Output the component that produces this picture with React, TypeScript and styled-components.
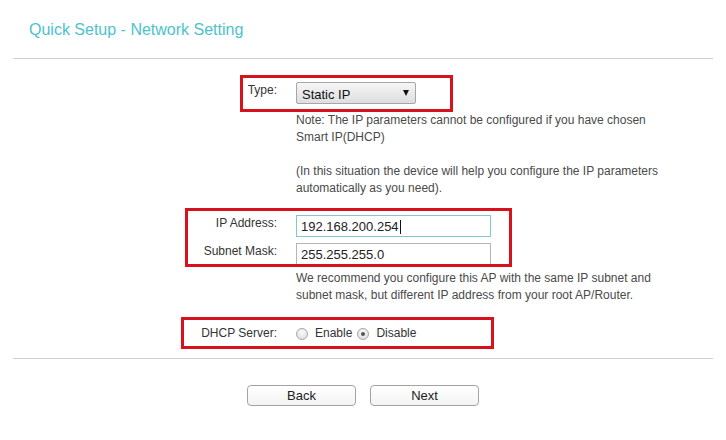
import styled, { createGlobalStyle } from 'styled-components';

const GlobalStyle = createGlobalStyle`
	body {
		margin: 0;
		background: #ffffff;
		font-family: 'Liberation Sans', Arial, sans-serif;
	}
`;

const Page = styled.div`
	position: relative;
	width: 726px;
	height: 440px;
	overflow: hidden;
`;

const Title = styled.h1`
	margin: 0;
	padding: 20px 0 18px 29px;
	font-size: 16px;
	line-height: 20px;
	font-weight: normal;
	color: #4cc3cc;
`;

const Divider = styled.div<{ $top?: number }>`
	margin: ${(props) => props.$top || 0}px 13px 0;
	height: 1px;
	background: #d0d0d0;
`;

const Form = styled.div`
	display: flex;
	flex-direction: column;
`;

const Row = styled.div<{ $top: number }>`
	display: grid;
	grid-template-columns: 277px 372px;
	column-gap: 19px;
	align-items: start;
	margin-top: ${(props) => props.$top}px;
`;

const Label = styled.label`
	text-align: right;
	font-size: 12px;
	line-height: 17px;
	color: #333;
`;

const Note = styled.div`
	grid-column: 2;
	font-size: 12px;
	line-height: 17px;
	color: #4a4a4a;

	p {
		margin: 0;
	}
	p + p {
		margin-top: 17px;
	}
`;

const Select = styled.div`
	display: flex;
	align-items: center;
	justify-content: space-between;
	box-sizing: border-box;
	width: 120px;
	height: 22px;
	padding: 3px 6px 1px 5px;
	border: 1px solid #a6a6a6;
	border-radius: 2px;
	background: linear-gradient(#f6f6f6, #dedede);
	font-size: 13px;
	line-height: 17px;
	color: #111;

	&::after {
		content: '';
		margin-top: -2px;
		border-left: 3.5px solid transparent;
		border-right: 3.5px solid transparent;
		border-top: 6px solid #111;
	}
`;

const Input = styled.div<{ $focused?: boolean }>`
	display: flex;
	align-items: center;
	box-sizing: border-box;
	width: 195px;
	height: 22px;
	padding: 1px 4px 0;
	border: 1px solid ${(props) => (props.$focused ? '#7fc8cf' : '#b5b5b5')};
	background: #fff;
	font-size: 13px;
	line-height: 17px;
	color: #222;
`;

const Caret = styled.span`
	display: inline-block;
	width: 1px;
	height: 14px;
	margin-left: 1px;
	background: #111;
`;

const RadioGroup = styled.div`
	display: flex;
	align-items: center;
	font-size: 12px;
	line-height: 17px;
	color: #333;
`;

const Radio = styled.span<{ $checked?: boolean }>`
	position: relative;
	box-sizing: border-box;
	width: 12px;
	height: 12px;
	margin-right: 7px;
	border: 1px solid #a8a8a8;
	border-radius: 50%;
	background: radial-gradient(circle at 50% 35%, #fbfbfb, #d9d9d9);

	&::after {
		content: '';
		display: ${(props) => (props.$checked ? 'block' : 'none')};
		position: absolute;
		left: 3px;
		top: 3px;
		width: 4px;
		height: 4px;
		border-radius: 50%;
		background: #555;
	}
`;

const RadioText = styled.span`
	margin-right: 5px;
`;

const Actions = styled.div`
	display: flex;
	justify-content: center;
	gap: 14px;
	margin-top: 26px;
`;

const Button = styled.button`
	box-sizing: border-box;
	width: 109px;
	height: 21px;
	padding: 0;
	border: 1px solid #a3a3a3;
	border-radius: 4px;
	background: linear-gradient(#ffffff, #f3f3f3);
	font-family: 'Liberation Sans', Arial, sans-serif;
	font-size: 13px;
	line-height: 19px;
	color: #222;
`;

// red annotation frames drawn over the form
const Mark = styled.div<{ $x: number; $y: number; $w: number; $h: number }>`
	position: absolute;
	left: ${(props) => props.$x}px;
	top: ${(props) => props.$y}px;
	width: ${(props) => props.$w}px;
	height: ${(props) => props.$h}px;
	box-sizing: border-box;
	border: 3px solid #d8121c;
	pointer-events: none;
`;

const App = () => {
	return (
		<Page>
			<GlobalStyle />
			<Title>Quick Setup - Network Setting</Title>
			<Divider />
			<Form>
				<Row $top={23}>
					<Label>Type:</Label>
					<Select>Static IP</Select>
				</Row>
				<Row $top={8}>
					<Note>
						<p>
							Note: The IP parameters cannot be configured if you have chosen
							Smart IP(DHCP)
						</p>
						<p>
							(In this situation the device will help you configure the IP
							parameters automatically as you need).
						</p>
					</Note>
				</Row>
				<Row $top={18}>
					<Label>IP Address:</Label>
					<Input $focused>
						192.168.200.254
						<Caret />
					</Input>
				</Row>
				<Row $top={6}>
					<Label>Subnet Mask:</Label>
					<Input>255.255.255.0</Input>
				</Row>
				<Row $top={5}>
					<Note>
						<p>
							We recommend you configure this AP with the same IP subnet and
							subnet mask, but different IP address from your root AP/Router.
						</p>
					</Note>
				</Row>
				<Row $top={21}>
					<Label>DHCP Server:</Label>
					<RadioGroup>
						<Radio />
						<RadioText>Enable</RadioText>
						<Radio $checked />
						<RadioText>Disable</RadioText>
					</RadioGroup>
				</Row>
			</Form>
			<Divider $top={16} />
			<Actions>
				<Button>Back</Button>
				<Button>Next</Button>
			</Actions>
			<Mark $x={240} $y={75} $w={213} $h={37} />
			<Mark $x={185} $y={208} $w={327} $h={59} />
			<Mark $x={181} $y={317} $w={313} $h={32} />
		</Page>
	);
};

export default App;
